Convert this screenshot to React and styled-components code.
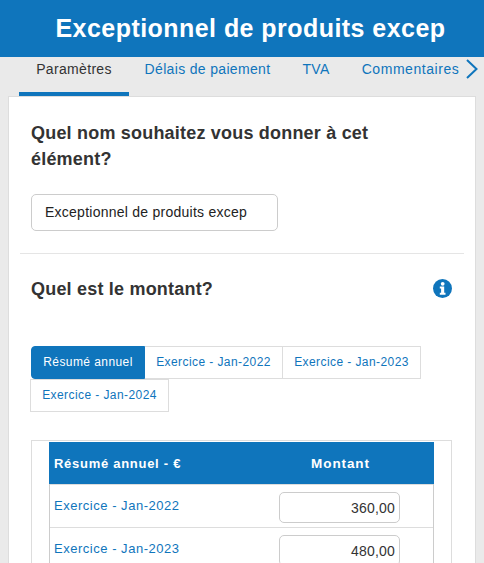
import React from "react";
import styled, { createGlobalStyle } from "styled-components";

const Global = createGlobalStyle`
  html, body { margin: 0; padding: 0; height: 563px; overflow: hidden; background: #eaeaea; }
  body { font-family: "Liberation Sans", Arial, sans-serif; }
  * { box-sizing: border-box; }
`;
const blue = "#0f75bc";
const Header = styled.header`
  height: 57px; background: ${blue}; color: #fff; display: flex; align-items: center; justify-content: center; padding-left: 17px;
`;
const Title = styled.h1`
  margin: 0; font-size: 25px; font-weight: 700; letter-spacing: 0.45px; white-space: nowrap;
`;
const TabBar = styled.nav`
  height: 39px; display: flex; padding-left: 19px; align-items: stretch; position: relative;
`;
const Tab = styled.a`
  width: ${p => p.$w}px; flex: none; font-size: 14px; letter-spacing: ${p => (p.$wide ? "0.55px" : "0.33px")}; padding-top: 4px; text-align: center; line-height: 16px;
  color: ${p => (p.$active ? "#333" : blue)};
  border-bottom: 4px solid ${p => (p.$active ? blue : "transparent")};
  white-space: nowrap;
`;
const Chevron = styled.svg`
  position: absolute; left: 466px; top: 2px;
`;
const Card = styled.main`
  margin: 0 8px; background: #fff; border: 1px solid #ddd; border-width: 1px 1px 0; height: 480px; padding: 0 11px; overflow: hidden;
`;
const Section = styled.section`
  padding: ${p => (p.$rule ? "23px 11px 22px" : "22px 11px 22px")};
  border-bottom: ${p => (p.$rule ? "1px solid #e5e5e5" : "none")};
`;
const Question = styled.h3`
  margin: 0; font-size: 18px; line-height: 26px; font-weight: 700; color: #333; letter-spacing: 0.2px;
`;
const NameInput = styled.div`
  margin-top: 22px; width: 247px; height: 37px; border: 1px solid #ccc; border-radius: 5px; padding-left: 13px;
  font-size: 14px; line-height: 35px; color: #222; letter-spacing: 0.25px;
`;
const QuestionRow = styled.div`
  display: flex; justify-content: space-between; align-items: flex-start; padding: 0 1px 0 0;
`;
const InfoSvg = styled.svg`
  margin-top: 3px;
`;
const Pills = styled.div`
  display: flex; flex-wrap: wrap; margin-top: 44px; width: 400px;
`;
const Pill = styled.a`
  height: 33px; line-height: 31px; font-size: 12px; letter-spacing: 0.42px; white-space: nowrap;
  width: ${p => p.$w}px; text-align: center;
  border: 1px solid ${p => (p.$active ? blue : "#ddd")};
  border-left-width: ${p => (p.$first ? "1px" : "0")};
  margin-left: ${p => (p.$wrap ? "-1px" : "0")};
  background: ${p => (p.$active ? blue : "#fff")};
  color: ${p => (p.$active ? "#fff" : blue)};
  border-radius: ${p => (p.$active ? "4px 0 0 4px" : "0")};
`;
const TableBox = styled.div`
  margin-top: 28px; width: 421px; border: 1px solid #ddd; border-bottom: 0; padding: 1px 17px 0; height: 130px;
`;
const Table = styled.div`
  width: 385px; border-left: 1px solid #ccc; border-right: 1px solid #ccc;
`;
const HeadRow = styled.div`
  height: 42px; margin: 0 -1px; background: ${blue}; color: #fff; font-weight: 700; font-size: 13px; letter-spacing: 0.72px;
  display: grid; grid-template-columns: 226px 1fr; align-items: center; padding-left: 5px;
`;
const HeadAmount = styled.span`
  text-align: center; padding-right: 33px; font-size: 13.5px; letter-spacing: 0.9px;
`;
const Row = styled.div`
  height: 43px; display: grid; grid-template-columns: 225px 121px; align-items: start; padding-left: 4px;
  border-top: 1px solid #ddd;
`;
const RowLabel = styled.a`
  color: ${blue}; font-size: 13px; letter-spacing: 0.52px; line-height: 16px; margin-top: 13px; white-space: nowrap;
`;
const Amount = styled.div`
  margin-top: 7px; height: 31px; border: 1px solid #ccc; border-radius: 5px; text-align: right; padding-right: 4px;
  font-size: 14px; line-height: 31px; color: #333; letter-spacing: 0.2px;
`;

const InfoIcon = () => (
  <InfoSvg width="19" height="19" viewBox="0 0 19 19" aria-hidden="true">
    <circle cx="9.5" cy="9.5" r="9.5" fill={blue} />
    <circle cx="9.7" cy="4.8" r="1.9" fill="#fff" />
    <path d="M6.8 7.6h4.4v6.2h1.3v1.9H6.8v-1.9h1.3v-4.3H6.8z" fill="#fff" />
  </InfoSvg>
);

export default function App() {
  return (
    <>
      <Global />
      <Header><Title>Exceptionnel de produits excep</Title></Header>
      <TabBar>
        <Tab $w={110} $active>Paramètres</Tab>
        <Tab $w={157}>Délais de paiement</Tab>
        <Tab $w={60}>TVA</Tab>
        <Tab $w={129} $wide>Commentaires</Tab>
        <Chevron width="12" height="20" viewBox="0 0 12 20" fill="none" stroke={blue} strokeWidth="2">
          <path d="M1 1l9.5 9-9.5 9" />
        </Chevron>
      </TabBar>
      <Card>
        <Section $rule>
          <Question>Quel nom souhaitez vous donner à cet élément?</Question>
          <NameInput>Exceptionnel de produits excep</NameInput>
        </Section>
        <Section>
          <QuestionRow>
            <Question>Quel est le montant?</Question>
            <InfoIcon />
          </QuestionRow>
          <Pills>
            <Pill $w={114} $active $first>Résumé annuel</Pill>
            <Pill $w={138}>Exercice - Jan-2022</Pill>
            <Pill $w={138}>Exercice - Jan-2023</Pill>
            <Pill $w={139} $first $wrap>Exercice - Jan-2024</Pill>
          </Pills>
          <TableBox>
            <Table>
              <HeadRow><span>Résumé annuel - €</span><HeadAmount>Montant</HeadAmount></HeadRow>
              <Row><RowLabel>Exercice - Jan-2022</RowLabel><Amount>360,00</Amount></Row>
              <Row><RowLabel>Exercice - Jan-2023</RowLabel><Amount>480,00</Amount></Row>
            </Table>
          </TableBox>
        </Section>
      </Card>
    </>
  );
}
